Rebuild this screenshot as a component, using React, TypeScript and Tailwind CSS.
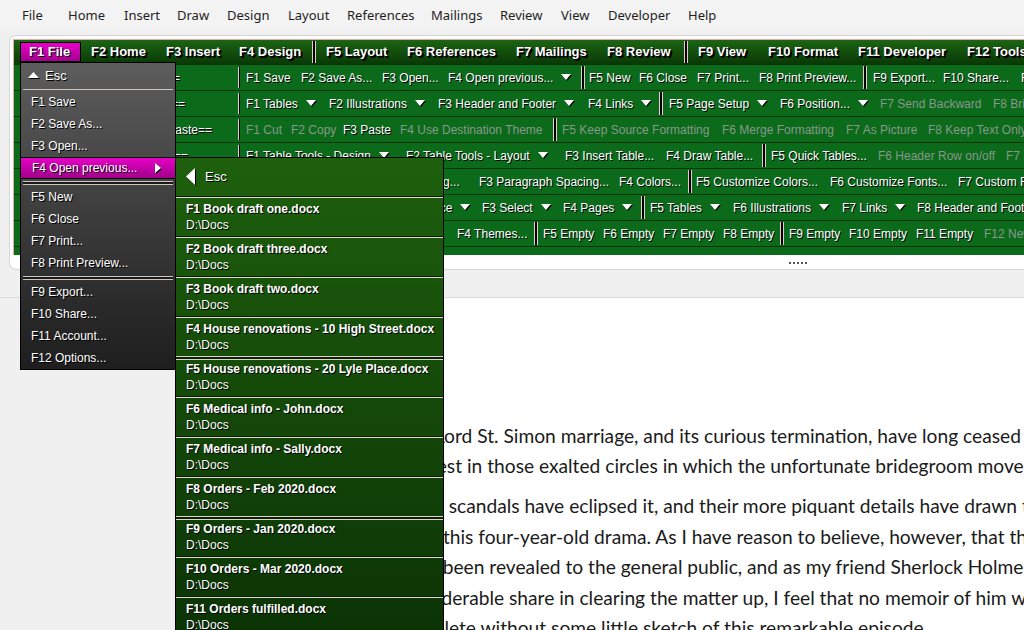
import React from 'react';

type Cell =
  | { t: string; w: string; g?: boolean; a?: boolean }
  | { sep: 's' | 'd'; w: string };

interface Row {
  label: string;
  pr: string;
  cells: Cell[];
}

const S = (w: string): Cell => ({ sep: 's', w });
const D = (w: string): Cell => ({ sep: 'd', w });

const rows: Row[] = [
  {
    label: '==File==',
    pr: 'pr-[56px]',
    cells: [
      S('w-[10px]'),
      { t: 'F1 Save', w: 'w-[55px]' },
      { t: 'F2 Save As...', w: 'w-[81px]' },
      { t: 'F3 Open...', w: 'w-[66px]' },
      { t: 'F4 Open previous...', w: 'w-[132px]', a: true },
      D('w-[9px]'),
      { t: 'F5 New', w: 'w-[50px]' },
      { t: 'F6 Close', w: 'w-[58px]' },
      { t: 'F7 Print...', w: 'w-[62px]' },
      { t: 'F8 Print Preview...', w: 'w-[103px]' },
      D('w-[11px]'),
      { t: 'F9 Export...', w: 'w-[70px]' },
      { t: 'F10 Share...', w: 'w-[78px]' },
      { t: 'F11 Account...', w: 'w-[100px]' },
    ],
  },
  {
    label: '==Insert==',
    pr: 'pr-[51px]',
    cells: [
      S('w-[10px]'),
      { t: 'F1 Tables', w: 'w-[83px]', a: true },
      { t: 'F2 Illustrations', w: 'w-[109px]', a: true },
      { t: 'F3 Header and Footer', w: 'w-[150px]', a: true },
      { t: 'F4 Links', w: 'w-[70px]', a: true },
      D('w-[11px]'),
      { t: 'F5 Page Setup', w: 'w-[111px]', a: true },
      { t: 'F6 Position...', w: 'w-[100px]', a: true },
      { t: 'F7 Send Backward', w: 'w-[113px]', g: true },
      { t: 'F8 Bring Forward', w: 'w-[110px]', g: true },
    ],
  },
  {
    label: '==Paste==',
    pr: 'pr-[24px]',
    cells: [
      S('w-[10px]'),
      { t: 'F1 Cut', w: 'w-[45px]', g: true },
      { t: 'F2 Copy', w: 'w-[52px]', g: true },
      { t: 'F3 Paste', w: 'w-[57px]' },
      { t: 'F4 Use Destination Theme', w: 'w-[152px]', g: true },
      D('w-[10px]'),
      { t: 'F5 Keep Source Formatting', w: 'w-[160px]', g: true },
      { t: 'F6 Merge Formatting', w: 'w-[124px]', g: true },
      { t: 'F7 As Picture', w: 'w-[82px]', g: true },
      { t: 'F8 Keep Text Only', w: 'w-[110px]', g: true },
    ],
  },
  {
    label: '==Table==',
    pr: 'pr-[48px]',
    cells: [
      S('w-[10px]'),
      { t: 'F1 Table Tools - Design', w: 'w-[160px]', a: true },
      { t: 'F2 Table Tools - Layout', w: 'w-[159px]', a: true },
      { t: 'F3 Insert Table...', w: 'w-[101px]' },
      { t: 'F4 Draw Table...', w: 'w-[95px]' },
      D('w-[10px]'),
      { t: 'F5 Quick Tables...', w: 'w-[107px]' },
      { t: 'F6 Header Row on/off', w: 'w-[128px]', g: true },
      { t: 'F7 First Column on/off', w: 'w-[130px]', g: true },
    ],
  },
  {
    label: '==Design==',
    pr: 'pr-[48px]',
    cells: [
      S('w-[10px]'),
      { t: 'F1 Style Set', w: 'w-[71px]' },
      { t: 'F2 Document Formatting...', w: 'w-[162px]' },
      { t: 'F3 Paragraph Spacing...', w: 'w-[140px]' },
      { t: 'F4 Colors...', w: 'w-[68px]' },
      D('w-[9px]'),
      { t: 'F5 Customize Colors...', w: 'w-[134px]' },
      { t: 'F6 Customize Fonts...', w: 'w-[128px]' },
      { t: 'F7 Custom Fonts...', w: 'w-[110px]' },
    ],
  },
  {
    label: '==Editing==',
    pr: 'pr-[48px]',
    cells: [
      S('w-[10px]'),
      { t: 'F1 Find', w: 'w-[145px]', a: true },
      { t: 'F2 Replace', w: 'w-[91px]', a: true },
      { t: 'F3 Select', w: 'w-[81px]', a: true },
      { t: 'F4 Pages', w: 'w-[77px]', a: true },
      D('w-[10px]'),
      { t: 'F5 Tables', w: 'w-[83px]', a: true },
      { t: 'F6 Illustrations', w: 'w-[109px]', a: true },
      { t: 'F7 Links', w: 'w-[75px]', a: true },
      { t: 'F8 Header and Footer', w: 'w-[150px]', a: true },
    ],
  },
  {
    label: '==Page==',
    pr: 'pr-[48px]',
    cells: [
      S('w-[10px]'),
      { t: 'F1 Empty', w: 'w-[56px]' },
      { t: 'F2 Empty', w: 'w-[56px]' },
      { t: 'F3 Page Color...', w: 'w-[99px]' },
      { t: 'F4 Themes...', w: 'w-[76px]' },
      D('w-[10px]'),
      { t: 'F5 Empty', w: 'w-[60px]' },
      { t: 'F6 Empty', w: 'w-[60px]' },
      { t: 'F7 Empty', w: 'w-[60px]' },
      { t: 'F8 Empty', w: 'w-[56px]' },
      D('w-[10px]'),
      { t: 'F9 Empty', w: 'w-[60px]' },
      { t: 'F10 Empty', w: 'w-[67px]' },
      { t: 'F11 Empty', w: 'w-[68px]' },
      { t: 'F12 New...', w: 'w-[80px]', g: true },
    ],
  },
];

const tabs: ({ t: string; w: string } | 'd')[] = [
  { t: 'F2 Home', w: 'w-[75px]' },
  { t: 'F3 Insert', w: 'w-[73px]' },
  { t: 'F4 Design', w: 'w-[82px]' },
  'd',
  { t: 'F5 Layout', w: 'w-[81px]' },
  { t: 'F6 References', w: 'w-[109px]' },
  { t: 'F7 Mailings', w: 'w-[91px]' },
  { t: 'F8 Review', w: 'w-[86px]' },
  'd',
  { t: 'F9 View', w: 'w-[70px]' },
  { t: 'F10 Format', w: 'w-[90px]' },
  { t: 'F11 Developer', w: 'w-[109px]' },
  { t: 'F12 Tools', w: 'w-[100px]' },
];

const menu = [
  { t: 'File', w: 'w-[46px]' },
  { t: 'Home', w: 'w-[56px]' },
  { t: 'Insert', w: 'w-[53px]' },
  { t: 'Draw', w: 'w-[50px]' },
  { t: 'Design', w: 'w-[61px]' },
  { t: 'Layout', w: 'w-[59px]' },
  { t: 'References', w: 'w-[84px]' },
  { t: 'Mailings', w: 'w-[69px]' },
  { t: 'Review', w: 'w-[61px]' },
  { t: 'View', w: 'w-[47px]' },
  { t: 'Developer', w: 'w-[80px]' },
  { t: 'Help', w: 'w-[50px]' },
];

const fileMenu: string[] = [
  'F1 Save',
  'F2 Save As...',
  'F3 Open...',
  'HL',
  'd',
  'F5 New',
  'F6 Close',
  'F7 Print...',
  'F8 Print Preview...',
  'd',
  'F9 Export...',
  'F10 Share...',
  'F11 Account...',
  'F12 Options...',
];

const recent = [
  'F1 Book draft one.docx',
  'F2 Book draft three.docx',
  'F3 Book draft two.docx',
  'F4 House renovations - 10 High Street.docx',
  'F5 House renovations - 20 Lyle Place.docx',
  'F6 Medical info - John.docx',
  'F7 Medical info - Sally.docx',
  'F8 Orders - Feb 2020.docx',
  'F9 Orders - Jan 2020.docx',
  'F10 Orders - Mar 2020.docx',
  'F11 Orders fulfilled.docx',
];

const sh = '[text-shadow:1px_1px_0_#000]';

function Tri({ dir, w, h, className }: { dir: 'down' | 'up' | 'left' | 'right'; w: number; h: number; className?: string }) {
  const pts =
    dir === 'down'
      ? `0,0 ${w},0 ${w / 2},${h}`
      : dir === 'up'
        ? `0,${h} ${w},${h} ${w / 2},0`
        : dir === 'left'
          ? `${w},0 ${w},${h} 0,${h / 2}`
          : `0,0 0,${h} ${w},${h / 2}`;
  return (
    <svg width={w + 1} height={h + 1} className={className}>
      <polygon points={pts} transform="translate(1,1)" fill="#000" />
      <polygon points={pts} fill="#fff" />
    </svg>
  );
}

function Sep({ kind, w }: { kind: 's' | 'd'; w: string }) {
  if (kind === 's') {
    return (
      <div className={`${w} shrink-0 self-stretch flex py-[2px]`}>
        <div className="ml-[2px] w-px bg-[#e8cccc]" />
        <div className="w-px bg-black" />
      </div>
    );
  }
  return (
    <div className={`${w} shrink-0 self-stretch flex py-[1px]`}>
      <div className="ml-[1px] w-px bg-[#e8cccc]" />
      <div className="w-[2px] bg-black" />
      <div className="w-px bg-[#e8cccc]" />
    </div>
  );
}

function RibbonRow({ row }: { row: Row }) {
  return (
    <div className="h-[26px] flex items-center border-b border-[#063409] bg-[#0c6a1b] overflow-hidden whitespace-nowrap text-[12px]">
      <div className={`w-[222px] shrink-0 text-right text-white ${sh} ${row.pr}`}>{row.label}</div>
      {row.cells.map((c, i) =>
        'sep' in c ? (
          <Sep key={i} kind={c.sep} w={c.w} />
        ) : (
          <div key={i} className={`${c.w} shrink-0 flex items-center overflow-hidden`}>
            <span className={c.g ? 'text-[#86998a]' : `text-white ${sh}`}>{c.t}</span>
            {c.a && <Tri dir="down" w={10} h={6} className="ml-[8px] shrink-0" />}
          </div>
        ),
      )}
    </div>
  );
}

function MenuSep({ double }: { double?: boolean }) {
  if (!double) {
    return (
      <div className="h-[3px] flex flex-col justify-center px-[2px]">
        <div className="h-px bg-[#cfc6c0]" />
      </div>
    );
  }
  return (
    <div className="h-[7px] flex flex-col justify-center px-[2px]">
      <div className="h-px bg-[#cfc6c0]" />
      <div className="h-[2px] bg-[#1a1a1a]" />
      <div className="h-px bg-[#cfc6c0]" />
    </div>
  );
}

export default function App() {
  return (
    <div className="relative w-[1024px] h-[630px] overflow-hidden bg-[#f0f0f0] flex flex-col font-['Liberation_Sans',Arial,sans-serif]">
      {/* top menu bar */}
      <div className="h-[30px] shrink-0 flex items-center pl-[22px] pt-[1px] bg-[#f3f3f3] text-[13px] text-[#1e1e1e] font-['Noto_Sans','Open_Sans',sans-serif]">
        {menu.map((m) => (
          <div key={m.t} className={`${m.w} shrink-0`}>
            {m.t}
          </div>
        ))}
      </div>

      {/* ribbon panel */}
      <div className="mt-[5px] ml-[9px] h-[235px] shrink-0 bg-white border border-r-0 border-[#d6d6d6] rounded-l-[7px] pt-[3px] pl-[3px] flex flex-col">
        <div className="h-[216px] shrink-0 border-l border-t border-[#e6a9a9] bg-[#063409] flex flex-col">
          {/* tabs */}
          <div className="h-[24px] shrink-0 flex items-center pl-[6px] bg-linear-to-b from-[#1c6513] to-[#0a3906] whitespace-nowrap overflow-hidden text-[13px] font-bold text-white">
            <div className={`w-[61px] h-[20px] shrink-0 border border-black bg-linear-to-b from-[#e800c8] to-[#a4008e] pl-[8px] flex items-center ${sh}`}>
              F1 File
            </div>
            {tabs.map((t, i) =>
              t === 'd' ? (
                <div key={i} className="w-[5px] shrink-0 self-stretch flex py-[1px]">
                  <div className="ml-[1px] w-px bg-[#e8cccc]" />
                  <div className="w-[2px] bg-black" />
                  <div className="w-px bg-[#e8cccc]" />
                </div>
              ) : (
                <div key={i} className={`${t.w} shrink-0 pl-[10px] [text-shadow:1px_1px_0_#000,2px_2px_0_#000]`}>
                  {t.t}
                </div>
              ),
            )}
          </div>
          <div className="mt-[1px] flex flex-col">
            {rows.map((r) => (
              <RibbonRow key={r.label} row={r} />
            ))}
          </div>
          <div className="flex-1 bg-[#0c6a1b]" />
        </div>
        <div className="flex-1 flex items-center pl-[776px] pt-[2px]">
          <div className="flex gap-[2px]">
            {[0, 1, 2, 3, 4].map((i) => (
              <div key={i} className="w-[2px] h-[2px] bg-[#555]" />
            ))}
          </div>
        </div>
      </div>

      {/* gap below ribbon */}
      <div className="h-[27px] shrink-0" />

      {/* document view: grey canvas with the white page */}
      <div className="flex-1 flex border-t border-[#dadada] bg-[#f0f0f0] overflow-hidden">
        <div className="ml-[302px] w-[816px] shrink-0 bg-white pt-[123px] pl-[96px] text-[19.2px] text-[#1a1a1a] whitespace-nowrap font-['Lato','Open_Sans',sans-serif]">
          <div className="leading-[30px] mb-[10px]">
            <div>The Lord St. Simon marriage, and its curious termination, have long ceased to be a subject of</div>
            <div>interest in those exalted circles in which the unfortunate bridegroom moves.</div>
          </div>
          <div className="leading-[30.5px]">
            <div>Fresh scandals have eclipsed it, and their more piquant details have drawn the gossips away</div>
            <div>from this four-year-old drama. As I have reason to believe, however, that the full facts have never</div>
            <div>have been revealed to the general public, and as my friend Sherlock Holmes had a</div>
            <div>considerable share in clearing the matter up, I feel that no memoir of him would be</div>
            <div>complete without some little sketch of this remarkable episode.</div>
          </div>
        </div>
      </div>

      {/* File dropdown */}
      <div className="absolute left-[20px] top-[62px] w-[156px] h-[308px] border border-black bg-linear-to-b from-[#5d5d5d] to-[#1e1e1e] text-[12px] text-white">
        <div className="h-[25px] flex items-center pl-[7px]">
          <Tri dir="up" w={11} h={6} />
          <span className={`ml-[5px] text-[13px] ${sh}`}>Esc</span>
        </div>
        <MenuSep />
        {fileMenu.map((f, i) =>
          f === 'd' ? (
            <MenuSep key={i} double />
          ) : f === 'HL' ? (
            <div
              key={i}
              className="h-[22px] -mx-px flex items-center justify-between pl-[11px] pr-[13px] border border-black bg-linear-to-b from-[#e600c6] to-[#a2008b]"
            >
              <span className={sh}>F4 Open previous...</span>
              <Tri dir="right" w={6} h={10} />
            </div>
          ) : (
            <div key={i} className={`h-[22px] flex items-center pl-[10px] ${sh}`}>
              {f}
            </div>
          ),
        )}
      </div>

      {/* Open previous submenu */}
      <div className="absolute left-[175px] top-[157px] w-[269px] h-[520px] border border-black bg-linear-to-b from-[#1e600d] to-[#0a3005] text-[12px] text-white">
        <div className="h-[38px] flex items-center pl-[10px]">
          <Tri dir="left" w={9} h={17} />
          <span className={`ml-[9px] text-[13px] ${sh}`}>Esc</span>
        </div>
        {recent.map((r, i) => {
          const dbl = i === 4 || i === 8;
          return (
            <React.Fragment key={r}>
              {dbl ? (
                <div className="h-[4px] flex flex-col">
                  <div className="h-px bg-[#dcd6cc]" />
                  <div className="h-[2px] bg-[#0b1f08]" />
                  <div className="h-px bg-[#dcd6cc]" />
                </div>
              ) : (
                <div className="h-[2px] flex flex-col">
                  <div className="h-px bg-[#0b1f08]" />
                  <div className="h-px bg-[#dcd6cc]" />
                </div>
              )}
              <div className={`${dbl ? 'h-[36px] pt-[1px]' : 'h-[38px] pt-[3px]'} pl-[10px] ${sh}`}>
                <div className="leading-[16px] font-bold">{r}</div>
                <div className="leading-[17px]">D:\Docs</div>
              </div>
            </React.Fragment>
          );
        })}
      </div>
    </div>
  );
}
